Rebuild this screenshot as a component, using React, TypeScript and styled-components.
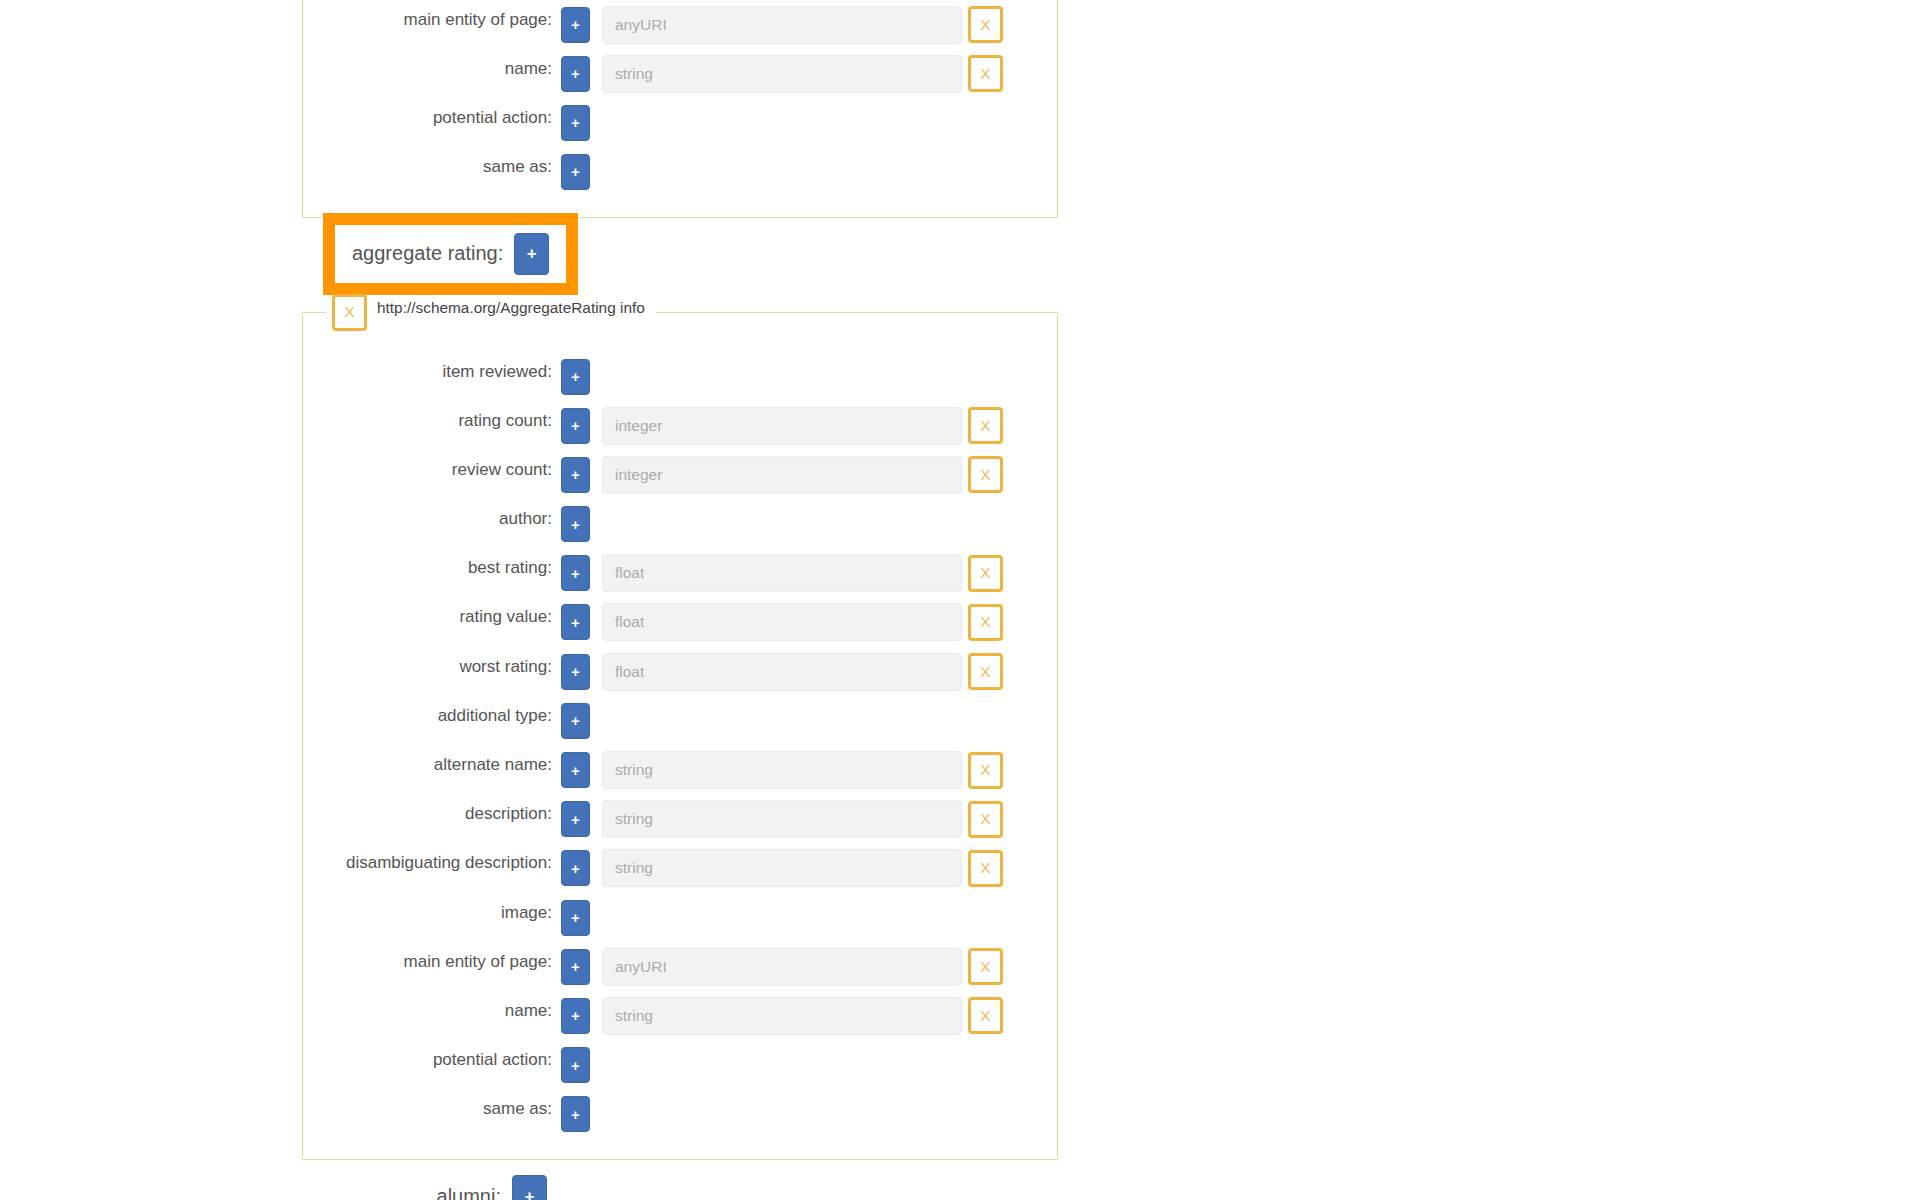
import styled, { createGlobalStyle, css } from 'styled-components';

const GlobalStyle = createGlobalStyle`
  body {
    margin: 0;
    background: #fff;
    font-family: "Liberation Sans", Helvetica, Arial, sans-serif;
    color: #555;
  }
`

const Page = styled.main`
  padding-left: 302px;
  width: 756px;
`

const Group = styled.fieldset<{ $clipped?: boolean }>`
  box-sizing: border-box;
  width: 756px;
  margin: 11px 0 0;
  padding: 27px 10px 26px;
  border: 1px solid #f1d892;
  display: flex;
  flex-direction: column;
  gap: 11.2px;
  ${p => p.$clipped && css`
    margin-top: 0;
    border-top: none;
    padding-top: 5.5px;
    gap: 11px;
  `}
`

const Legend = styled.legend`
  display: flex;
  align-items: flex-start;
  gap: 10px;
  margin-left: 13px;
  padding: 0 11px 0 6px;
`

const LegendText = styled.span`
  padding-top: 5px;
  font-size: 15.4px;
  line-height: 18px;
  color: #444;
`

const Row = styled.div`
  display: flex;
  align-items: center;
  height: 38px;
`

const Label = styled.label`
  align-self: flex-start;
  box-sizing: border-box;
  width: 239px;
  margin-right: 9px;
  padding-top: 4px;
  text-align: right;
  font-size: 17px;
  line-height: 20px;
  color: #555;
`

const AddButton = styled.button<{ $big?: boolean }>`
  box-sizing: border-box;
  width: 29px;
  height: 36px;
  margin-right: 12px;
  padding: 0;
  border: 1px solid #3b68ab;
  border-radius: 4px;
  background: #4472b8;
  color: #fff;
  font-family: "Liberation Sans", Arial, sans-serif;
  font-weight: bold;
  font-size: 15px;
  line-height: 1;
  ${p => p.$big && css`
    width: 35px;
    height: 42px;
    margin-right: 0;
    font-size: 17px;
  `}
`

const TypeInput = styled.input`
  box-sizing: border-box;
  width: 360px;
  height: 38px;
  margin-right: 6px;
  padding: 0 12px;
  border: 1px solid #ebebeb;
  border-radius: 4px;
  background: #f2f2f2;
  font-family: "Liberation Sans", Arial, sans-serif;
  font-size: 15.5px;
  outline: none;
  &::placeholder {
    color: #ababab;
  }
`

const RemoveButton = styled.button`
  box-sizing: border-box;
  width: 35px;
  height: 37px;
  padding: 0;
  border: 3px solid #f0b43e;
  border-radius: 4px;
  background: #fff;
  color: #f2b955;
  font-family: "Liberation Sans", Arial, sans-serif;
  font-size: 15.5px;
`

const TopRow = styled.div<{ $highlight?: boolean }>`
  display: inline-flex;
  align-items: center;
  gap: 11px;
  margin: 7px 0 0 33px;
  padding: 8px 17px;
  ${p => p.$highlight && css`
    outline: 12px solid #ff9500;
  `}
`

const TopLabel = styled.label`
  min-width: 149px;
  text-align: right;
  font-size: 20px;
  color: #555;
`

type Prop = { name: string; type?: string }

const tail: Prop[] = [
  { name: 'main entity of page', type: 'anyURI' },
  { name: 'name', type: 'string' },
  { name: 'potential action' },
  { name: 'same as' },
]

const ratingProps: Prop[] = [
  { name: 'item reviewed' },
  { name: 'rating count', type: 'integer' },
  { name: 'review count', type: 'integer' },
  { name: 'author' },
  { name: 'best rating', type: 'float' },
  { name: 'rating value', type: 'float' },
  { name: 'worst rating', type: 'float' },
  { name: 'additional type' },
  { name: 'alternate name', type: 'string' },
  { name: 'description', type: 'string' },
  { name: 'disambiguating description', type: 'string' },
  { name: 'image' },
  ...tail,
]

function PropRow({ name, type }: Prop) {
  return (
    <Row>
      <Label>{name}:</Label>
      <AddButton>+</AddButton>
      {type && (
        <>
          <TypeInput placeholder={type} readOnly />
          <RemoveButton>X</RemoveButton>
        </>
      )}
    </Row>
  )
}

function App() {
  return (
    <Page>
      <GlobalStyle />
      <Group $clipped>
        {tail.map(p => <PropRow key={p.name} {...p} />)}
      </Group>

      <TopRow $highlight>
        <TopLabel>aggregate rating:</TopLabel>
        <AddButton $big>+</AddButton>
      </TopRow>

      <Group>
        <Legend>
          <RemoveButton>X</RemoveButton>
          <LegendText>http://schema.org/AggregateRating info</LegendText>
        </Legend>
        {ratingProps.map(p => <PropRow key={p.name} {...p} />)}
      </Group>

      <TopRow>
        <TopLabel>alumni:</TopLabel>
        <AddButton $big>+</AddButton>
      </TopRow>
    </Page>
  )
}

export default App;
